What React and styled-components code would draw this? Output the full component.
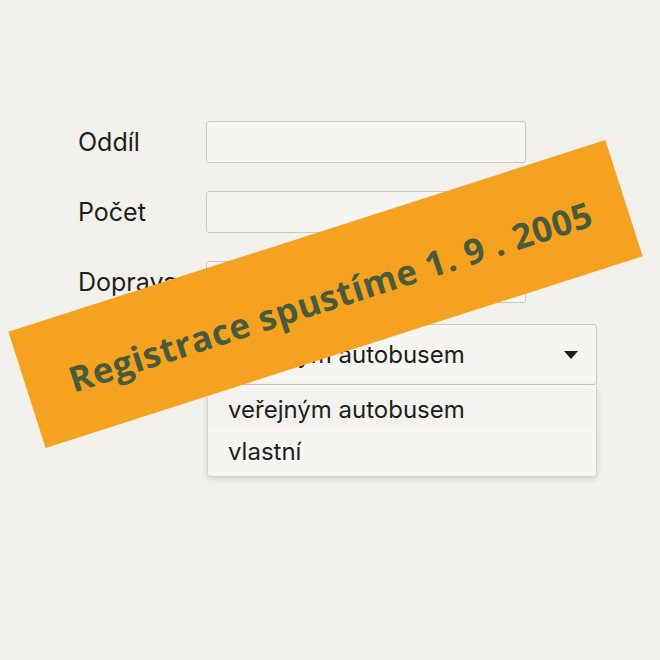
import React from "react";
import styled, { createGlobalStyle } from "styled-components";

const Global = createGlobalStyle`
  html, body { margin: 0; padding: 0; background: #f1f0eb; }
  body { width: 660px; height: 660px; overflow: hidden; font-family: Inter, "Noto Sans", sans-serif; }
`;

const Page = styled.div`
  position: relative;
  width: 660px;
  height: 660px;
  box-sizing: border-box;
  padding: 121px 0 0 78px;
  background: #f1f0eb;
  color: #1e1e1c;
`;

const Form = styled.div`
  display: flex;
  flex-direction: column;
  gap: 28px;
`;

const Row = styled.div`
  display: flex;
  align-items: center;
  height: 42px;
`;

const Label = styled.div`
  width: 128px;
  font-size: 25px;
  line-height: 44px;
`;

const Input = styled.div`
  width: ${(p) => p.$w || 320}px;
  height: 42px;
  box-sizing: border-box;
  border: 1.5px solid #c9c8c3;
  border-radius: 3px;
  background: #f6f5f1;
`;

const SelectWrap = styled.div`
  margin: 21px 0 0 128px;
  width: 391px;
  display: flex;
  flex-direction: column;
`;

const SelectBox = styled.div`
  height: 61px;
  box-sizing: border-box;
  border: 1.5px solid #c9c8c3;
  border-radius: 3px;
  background: #f6f5f1;
  display: flex;
  align-items: center;
  justify-content: space-between;
  padding: 0 18px 0 21px;
  font-size: 24px;
`;

const Caret = styled.span`
  width: 0;
  height: 0;
  border-left: 7px solid transparent;
  border-right: 7px solid transparent;
  border-top: 8px solid #1e1e1c;
`;

const List = styled.div`
  margin-left: 1px;
  background: #f6f5f1;
  border: 1px solid #d3d2cd;
  border-top: none;
  border-radius: 0 0 3px 3px;
  box-shadow: 0 2px 6px rgba(0, 0, 0, 0.12);
  padding: 3px 0 4px;
`;

const Option = styled.div`
  height: 42px;
  display: flex;
  align-items: center;
  padding-left: 20px;
  font-size: 24px;
  background: ${(p) => (p.$active ? "#f3f2ee" : "transparent")};
`;

const Banner = styled.div`
  position: absolute;
  left: 325px;
  top: 293.5px;
  width: 627px;
  height: 122px;
  margin: -61px 0 0 -313.5px;
  transform: rotate(-17.8deg);
  background: #f5a221;
  display: flex;
  align-items: center;
  justify-content: center;
  font-family: "Open Sans", "Noto Sans", sans-serif;
  font-weight: 700;
  font-size: 35px;
  letter-spacing: 0.6px;
  color: #4a5b3b;
  white-space: nowrap;
  padding: 6px 0 0 8px;
  box-sizing: border-box;
`;

export default function App() {
  return (
    <>
      <Global />
      <Page>
        <Form>
          <Row>
            <Label>Oddíl</Label>
            <Input />
          </Row>
          <Row>
            <Label>Počet</Label>
            <Input />
          </Row>
          <Row>
            <Label>Doprava</Label>
            <Input />
          </Row>
        </Form>
        <SelectWrap>
          <SelectBox>
            <span>veřejným autobusem</span>
            <Caret />
          </SelectBox>
          <List>
            <Option $active>veřejným autobusem</Option>
            <Option>vlastní</Option>
          </List>
        </SelectWrap>
        <Banner>Registrace spustíme 1. 9 . 2005</Banner>
      </Page>
    </>
  );
}
